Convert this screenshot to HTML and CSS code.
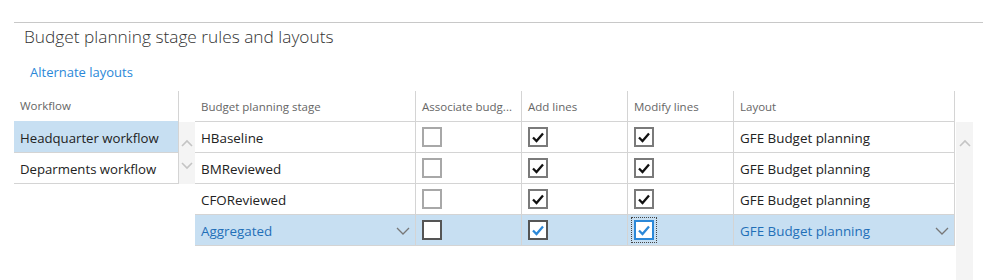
FILE: index.html
```html
<!DOCTYPE html>
<html lang="en">

<head>
    <meta charset="UTF-8" />
    <title>Budget planning stage rules and layouts</title>
    <link rel="stylesheet" href="styles.css">
</head>

<body>
    <div class="topline"></div>
    <h1 class="title">Budget planning stage rules and layouts</h1>
    <a class="link" href="#">Alternate layouts</a>

    <div class="grids">
        <div class="wf-grid">
            <div class="wf-head">Workflow</div>
            <div class="wf-row selected">Headquarter workflow</div>
            <div class="wf-row">Deparments workflow</div>
        </div>

        <div class="scroll small">
            <div class="scroll-track">
                <svg class="chev" width="12" height="8" viewBox="0 0 12 8"><path d="M1 7 L6 2 L11 7" /></svg>
                <svg class="chev" width="12" height="8" viewBox="0 0 12 8"><path d="M1 1 L6 6 L11 1" /></svg>
            </div>
        </div>

        <div class="stage-grid">
            <div class="cell head first">Budget planning stage</div>
            <div class="cell head">Associate budg...</div>
            <div class="cell head">Add lines</div>
            <div class="cell head">Modify lines</div>
            <div class="cell head last">Layout</div>

            <div class="cell first">HBaseline</div>
            <div class="cell"><span class="box"></span></div>
            <div class="cell"><span class="box checked"><svg viewBox="0 0 16 16"><path d="M3 8.5 L6.5 12 L13 4.5" /></svg></span></div>
            <div class="cell"><span class="box checked"><svg viewBox="0 0 16 16"><path d="M3 8.5 L6.5 12 L13 4.5" /></svg></span></div>
            <div class="cell last">GFE Budget planning</div>

            <div class="cell first">BMReviewed</div>
            <div class="cell"><span class="box"></span></div>
            <div class="cell"><span class="box checked"><svg viewBox="0 0 16 16"><path d="M3 8.5 L6.5 12 L13 4.5" /></svg></span></div>
            <div class="cell"><span class="box checked"><svg viewBox="0 0 16 16"><path d="M3 8.5 L6.5 12 L13 4.5" /></svg></span></div>
            <div class="cell last">GFE Budget planning</div>

            <div class="cell first">CFOReviewed</div>
            <div class="cell"><span class="box"></span></div>
            <div class="cell"><span class="box checked"><svg viewBox="0 0 16 16"><path d="M3 8.5 L6.5 12 L13 4.5" /></svg></span></div>
            <div class="cell"><span class="box checked"><svg viewBox="0 0 16 16"><path d="M3 8.5 L6.5 12 L13 4.5" /></svg></span></div>
            <div class="cell last">GFE Budget planning</div>

            <div class="cell first sel">
                <span>Aggregated</span>
                <svg class="drop" width="14" height="8" viewBox="0 0 14 8"><path d="M1 1 L7 7 L13 1" /></svg>
            </div>
            <div class="cell sel"><span class="box"></span></div>
            <div class="cell sel"><span class="box checked"><svg viewBox="0 0 16 16"><path d="M3 8.5 L6.5 12 L13 4.5" /></svg></span></div>
            <div class="cell sel"><span class="box checked focus"><svg viewBox="0 0 16 16"><path d="M3 8.5 L6.5 12 L13 4.5" /></svg></span></div>
            <div class="cell last sel">
                <span>GFE Budget planning</span>
                <svg class="drop" width="14" height="8" viewBox="0 0 14 8"><path d="M1 1 L7 7 L13 1" /></svg>
            </div>
        </div>

        <div class="scroll tall">
            <div class="scroll-track">
                <svg class="chev" width="12" height="8" viewBox="0 0 12 8"><path d="M1 7 L6 2 L11 7" /></svg>
            </div>
        </div>
    </div>
</body>

</html>
```

FILE: styles.css
```css
* {
    margin: 0;
    padding: 0;
    box-sizing: border-box;
    font-family: 'Open Sans', 'Noto Sans', sans-serif;
}

body {
    background: #fff;
    color: #222;
    overflow: hidden;
}

.topline {
    margin-top: 22px;
    margin-left: 14px;
    border-top: 1px solid #c8c8c8;
}

.title {
    font-size: 17.3px;
    font-weight: 300;
    color: #333;
    line-height: 28px;
    padding-left: 24px;
}

.link {
    display: block;
    padding-left: 30px;
    margin-top: 11px;
    line-height: 20px;
    font-size: 13px;
    color: #2b88d8;
    text-decoration: none;
}

.grids {
    display: flex;
    margin-top: 9px;
    align-items: flex-start;
}

/* workflow list */
.wf-grid {
    margin-left: 14px;
    width: 164px;
}

.wf-head {
    height: 30px;
    line-height: 30px;
    padding-left: 6px;
    font-size: 11.5px;
    color: #666;
}

.wf-row {
    height: 31px;
    line-height: 32px;
    padding-left: 6px;
    font-size: 13.2px;
    border-top: 1px solid #d4d4d4;
}

.wf-row:last-child {
    border-bottom: 1px solid #d4d4d4;
    height: 32px;
}

.wf-row.selected {
    background: #c7dff2;
    border-top-color: #c7dff2;
}

/* scroll strips */
.scroll {
    display: flex;
    flex-direction: column;
}

.scroll.small {
    width: 17px;
    height: 93px;
    border-left: 1px solid #d4d4d4;
}

.scroll.tall {
    width: 17px;
    height: 189px;
    margin-left: 1px;
}

.scroll-track {
    margin-top: 31px;
    flex: 1;
    background: #f4f4f4;
    display: flex;
    flex-direction: column;
    align-items: center;
    padding-top: 17px;
    gap: 15px;
}

.chev {
    fill: none;
    stroke: #c4c4c4;
    stroke-width: 1.6;
}

/* stage grid */
.stage-grid {
    display: grid;
    grid-template-columns: 220px 106px 106px 106px 222px;
    grid-auto-rows: 31px;
}

.cell {
    border-left: 1px solid #d4d4d4;
    border-bottom: 1px solid #d4d4d4;
    padding-left: 6px;
    padding-top: 1px;
    display: flex;
    align-items: center;
    font-size: 13.4px;
    color: #222;
    white-space: nowrap;
    overflow: hidden;
}

.cell.first {
    border-left: none;
}

.cell.last {
    border-right: 1px solid #d4d4d4;
}

.cell.head {
    font-size: 11.5px;
    color: #666;
    padding-top: 0;
}

.cell.sel {
    background: #c7dff2;
    color: #1f6fb8;
}

.cell .drop {
    margin-left: auto;
    margin-right: 5px;
    fill: none;
    stroke: #777;
    stroke-width: 1.3;
}

/* checkboxes */
.box {
    width: 20px;
    height: 20px;
    margin-top: -1px;
    border: 2px solid #a8a8a8;
    background: #fff;
    display: flex;
    align-items: center;
    justify-content: center;
}

.box.checked {
    border-color: #7a7a7a;
}

.box svg {
    width: 16px;
    height: 16px;
    fill: none;
    stroke: #111;
    stroke-width: 2.3;
}

.sel .box {
    border-color: #555;
}

.sel .box svg {
    stroke: #2b88d8;
}

.sel .box.focus {
    border-color: #2b88d8;
    outline: 1px dotted #444;
    outline-offset: 2px;
}
```
